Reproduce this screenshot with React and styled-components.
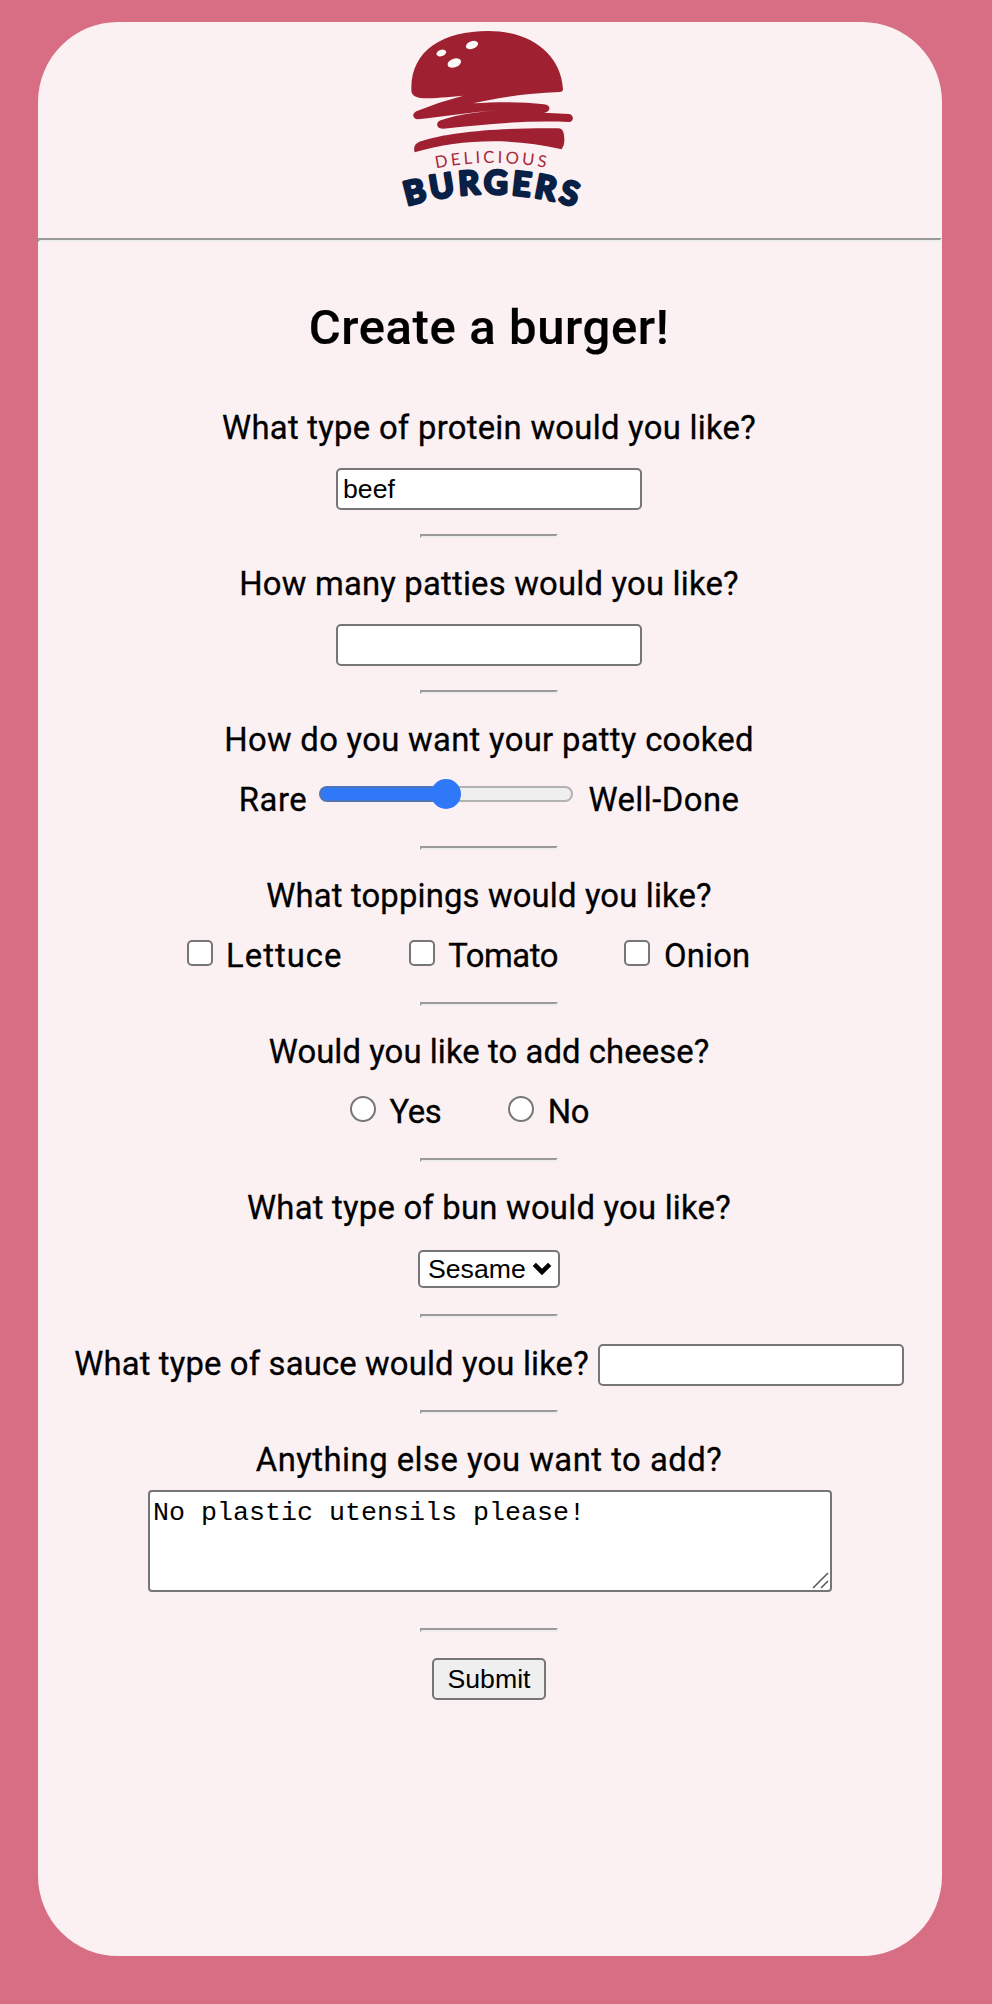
import React, { useState } from "react";
import styled, { createGlobalStyle } from "styled-components";

const GlobalStyle = createGlobalStyle`
  * { box-sizing: border-box; }
  html, body { margin: 0; padding: 0; }
  body { background: #d76e84; color: #000; font-family: Roboto, "Open Sans", sans-serif; }
`;

const Page = styled.main`
  min-height: 2004px;
  padding: 22px 50px 48px 38px;
  background: #d76e84;
`;

const Card = styled.div`
  height: 1934px;
  border-radius: 80px;
  background: #fbf0f2;
`;

const Header = styled.header`
  height: 216px;
  display: flex;
  justify-content: center;
`;

const Logo = styled.svg`
  display: block;
  width: 220px;
  height: 216px;
`;

const Rule = styled.hr`
  width: ${(p) => (p.$short ? "138px" : "100%")};
  height: 4px;
  margin: 0;
  border: 2px solid;
  border-color: #9a9a9a #eeeeee #eeeeee #9a9a9a;
`;

const Form = styled.form`
  display: flex;
  flex-direction: column;
  align-items: center;
  padding-right: 2px;
`;

const Title = styled.h1`
  margin: 0;
  height: 140px;
  padding-top: 57px;
  font-size: 49px;
  line-height: 58px;
  font-weight: 500;
  letter-spacing: 0.62px;
  -webkit-text-stroke: 0.2px #000;
`;

const Section = styled.section`
  height: ${(p) => p.$height || 152}px;
  padding-top: 26px;
  display: flex;
  flex-direction: ${(p) => (p.$inline ? "row" : "column")};
  align-items: ${(p) => (p.$inline ? "flex-start" : "center")};
`;

const Label = styled.label`
  font-size: 32.8px;
  line-height: 40px;
  white-space: nowrap;
  letter-spacing: ${(p) => (p.$track || 0) - 0.38}px;
  -webkit-text-stroke: 0.3px #000;
`;

const Controls = styled.div`
  display: flex;
  align-items: flex-start;
  margin-top: 20px;
  gap: ${(p) => p.$gap || 0}px;
  padding-right: ${(p) => p.$trail || 0}px;
`;

const TextInput = styled.input`
  width: 306px;
  height: 42px;
  padding: 2px 5px;
  margin-left: ${(p) => p.$offset || 0}px;
  border: 2px solid #767676;
  border-radius: 5px;
  background: #fff;
  color: #000;
  font: 26.667px "Liberation Sans", Arial, sans-serif;
  outline: none;
`;

const Slider = styled.input`
  appearance: none;
  width: 254px;
  height: 16px;
  margin: 6px 15px 0 12px;
  border-radius: 8px;
  background: transparent;

  &::-webkit-slider-runnable-track {
    height: 16px;
    border: 2px solid transparent;
    border-radius: 8px;
    background:
      linear-gradient(to right, #2f78f8 50%, #efefef 50%) padding-box,
      linear-gradient(to right, #4f74b8 50%, #b2b2b2 50%) border-box;
  }
  &::-webkit-slider-thumb {
    appearance: none;
    width: 30px;
    height: 30px;
    margin-top: -9px;
    border-radius: 50%;
    background: #2f78f8;
  }
`;

const Choice = styled.div`
  display: flex;
  align-items: flex-start;
  gap: 13.5px;
`;

const Tick = styled.input`
  appearance: none;
  width: 26px;
  height: 26px;
  margin: 4px 0 0;
  border: 2px solid #767676;
  border-radius: ${(p) => (p.type === "radio" ? "50%" : "5px")};
  background: #fff;
  &:checked { background: #2f78f8; }
`;

const SelectWrap = styled.div`
  position: relative;
  margin-top: 2px;
`;

const Select = styled.select`
  appearance: none;
  display: block;
  width: 142px;
  height: 38px;
  padding: 0 8px;
  border: 2px solid #767676;
  border-radius: 5px;
  background: #fff;
  color: #000;
  font: 26.667px "Liberation Sans", Arial, sans-serif;
`;

const Chevron = styled.svg`
  position: absolute;
  top: 12px;
  right: 8px;
  width: 20px;
  height: 14px;
  pointer-events: none;
`;

const NoteWrap = styled.div`
  position: relative;
  margin: 10px 0 0 2px;
`;

const Note = styled.textarea`
  display: block;
  width: 684px;
  height: 102px;
  padding: 6px 3px;
  border: 2px solid #767676;
  border-radius: 4px;
  background: #fff;
  color: #000;
  font: 26.667px "Liberation Mono", monospace;
  resize: none;
  outline: none;
`;

const Grip = styled.svg`
  position: absolute;
  right: 3px;
  bottom: 3px;
  width: 17px;
  height: 17px;
  pointer-events: none;
`;

const Submit = styled.button`
  width: 114px;
  height: 42px;
  padding: 0;
  border: 2px solid #767676;
  border-radius: 5px;
  background: #efefef;
  color: #000;
  font: 26.667px "Liberation Sans", Arial, sans-serif;
`;

function BurgerLogo() {
  return (
    <Logo viewBox="0 36 660 648" role="img" aria-label="Delicious Burgers">
      <g fill="#9f2030">
        <path d="M94 235C94 120 190 63 325 63C455 63 543 135 549 237Q549 246 538 246C440 249 350 264 280 280C350 275 430 275 492 283C506 285 511 292 507 300Q504 306 492 308L567 312C583 315 582 335 567 336C440 330 310 343 190 356C169 357 165 337 182 331C235 312 300 306 358 300C270 307 190 319 114 328C97 327 95 311 109 304C155 285 200 270 250 257C205 261 160 265 130 265C106 264 94 255 94 241Z" />
        <path d="M104 427C100 413 103 402 118 395C210 364 370 353 535 355C550 356 553 370 553 390Q554 406 545 418C390 382 240 388 104 427Z" />
      </g>
      <g fill="#faf8f8">
        <ellipse cx="184" cy="129" rx="15" ry="9.5" transform="rotate(-18 184 129)" />
        <ellipse cx="276" cy="105" rx="19" ry="11.5" transform="rotate(-20 276 105)" />
        <ellipse cx="223" cy="159" rx="21" ry="13" transform="rotate(-20 223 159)" />
      </g>
      <path id="upperArc" d="M168 475Q332 443 500 474" fill="none" />
      <path id="lowerArc" d="M81 588Q335 513 591 592" fill="none" />
      <text fill="#a8283a" fontFamily="Lato, sans-serif" fontSize="50" textLength="331">
        <textPath href="#upperArc" textLength="331">DELICIOUS</textPath>
      </text>
      <text
        fill="#082046"
        stroke="#082046"
        strokeWidth="9"
        strokeLinejoin="round"
        fontFamily="Lato, sans-serif"
        fontWeight="700"
        fontSize="98"
        textLength="512"
      >
        <textPath href="#lowerArc" textLength="512">BURGERS</textPath>
      </text>
    </Logo>
  );
}

const toppings = [
  { name: "Lettuce", track: 1.4 },
  { name: "Tomato", track: -0.1 },
  { name: "Onion", track: 0.6 },
];

export default function App() {
  const [doneness, setDoneness] = useState(50);
  return (
    <Page>
      <GlobalStyle />
      <Card>
        <Header>
          <BurgerLogo />
        </Header>
        <Rule />
        <Form onSubmit={(e) => e.preventDefault()}>
          <Title>Create a burger!</Title>

          <Section>
            <Label htmlFor="protein" $track={0.656}>What type of protein would you like?</Label>
            <Controls>
              <TextInput id="protein" defaultValue="beef" />
            </Controls>
          </Section>
          <Rule $short />

          <Section>
            <Label htmlFor="patties" $track={0.594}>How many patties would you like?</Label>
            <Controls>
              <TextInput id="patties" />
            </Controls>
          </Section>
          <Rule $short />

          <Section>
            <Label htmlFor="cooked" $track={0.69}>How do you want your patty cooked</Label>
            <Controls>
              <Label as="span" $track={1}>Rare</Label>
              <Slider
                id="cooked"
                type="range"
                value={doneness}
                onChange={(e) => setDoneness(Number(e.target.value))}
              />
              <Label as="span" $track={0.85}>Well-Done</Label>
            </Controls>
          </Section>
          <Rule $short />

          <Section>
            <Label as="span" $track={0.543}>What toppings would you like?</Label>
            <Controls $gap={66.5} $trail={41}>
              {toppings.map((t) => (
                <Choice key={t.name}>
                  <Tick type="checkbox" id={t.name} />
                  <Label htmlFor={t.name} $track={t.track}>{t.name}</Label>
                </Choice>
              ))}
            </Controls>
          </Section>
          <Rule $short />

          <Section>
            <Label as="span" $track={0.468}>Would you like to add cheese?</Label>
            <Controls $gap={67} $trail={39}>
              {["Yes", "No"].map((answer) => (
                <Choice key={answer}>
                  <Tick type="radio" name="cheese" id={answer} />
                  <Label htmlFor={answer}>{answer}</Label>
                </Choice>
              ))}
            </Controls>
          </Section>
          <Rule $short />

          <Section>
            <Label htmlFor="bun" $track={0.616}>What type of bun would you like?</Label>
            <Controls>
              <SelectWrap>
                <Select id="bun">
                  <option>Sesame</option>
                </Select>
                <Chevron viewBox="0 0 20 14">
                  <path d="M2.3 2.3L10 10L17.7 2.3" fill="none" stroke="#000" strokeWidth="4.6" />
                </Chevron>
              </SelectWrap>
            </Controls>
          </Section>
          <Rule $short />

          <Section $inline $height={92}>
            <Label htmlFor="sauce" $track={0.54}>What type of sauce would you like?</Label>
            <TextInput id="sauce" $offset={9} />
          </Section>
          <Rule $short />

          <Section $height={214}>
            <Label htmlFor="extra" $track={0.88}>Anything else you want to add?</Label>
            <NoteWrap>
              <Note id="extra" defaultValue="No plastic utensils please!" spellCheck={false} />
              <Grip viewBox="0 0 17 17">
                <path d="M1 16L16 1M9 16L16 9" fill="none" stroke="#555" strokeWidth="1.5" />
              </Grip>
            </NoteWrap>
          </Section>
          <Rule $short />

          <Section $height={152}>
            <Submit type="submit">Submit</Submit>
          </Section>
        </Form>
      </Card>
    </Page>
  );
}
